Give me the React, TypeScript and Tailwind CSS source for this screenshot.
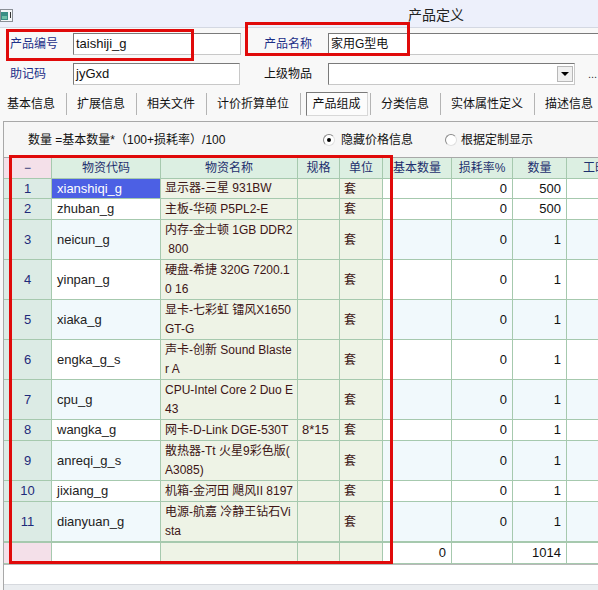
// 产品定义 — 产品组成 tab
const FONT = { fontFamily: '"Liberation Sans", "Noto Sans CJK SC", sans-serif' };

interface Part {
  n: number;
  code: string;
  name: string[];
  spec?: string;
  h: 'h-[20px]' | 'h-[21px]' | 'h-[40px]';
  qty: string;
}

const parts: Part[] = [
  { n: 1, code: 'xianshiqi_g', name: ['显示器-三星 931BW'], h: 'h-[20px]', qty: '500' },
  { n: 2, code: 'zhuban_g', name: ['主板-华硕 P5PL2-E'], h: 'h-[21px]', qty: '500' },
  { n: 3, code: 'neicun_g', name: ['内存-金士顿 1GB DDR2', '\u00a0800'], h: 'h-[40px]', qty: '1' },
  { n: 4, code: 'yinpan_g', name: ['硬盘-希捷 320G 7200.1', '0 16'], h: 'h-[40px]', qty: '1' },
  { n: 5, code: 'xiaka_g', name: ['显卡-七彩虹 镭风X1650', 'GT-G'], h: 'h-[40px]', qty: '1' },
  { n: 6, code: 'engka_g_s', name: ['声卡-创新 Sound Blaste', 'r A'], h: 'h-[40px]', qty: '1' },
  { n: 7, code: 'cpu_g', name: ['CPU-Intel Core 2 Duo E', '43'], h: 'h-[40px]', qty: '1' },
  { n: 8, code: 'wangka_g', name: ['网卡-D-Link DGE-530T'], spec: '8*15', h: 'h-[21px]', qty: '1' },
  { n: 9, code: 'anreqi_g_s', name: ['散热器-Tt 火星9彩色版(', 'A3085)'], h: 'h-[40px]', qty: '1' },
  { n: 10, code: 'jixiang_g', name: ['机箱-金河田 飓风II 8197'], h: 'h-[21px]', qty: '1' },
  { n: 11, code: 'dianyuan_g', name: ['电源-航嘉 冷静王钻石Vi', 'sta'], h: 'h-[40px]', qty: '1' },
];

const cell = 'shrink-0 flex items-center overflow-hidden whitespace-nowrap border-r border-b border-[#a6c9ae]';
const tabs = ['基本信息', '扩展信息', '相关文件', '计价折算单位', '产品组成', '分类信息', '实体属性定义', '描述信息'];

function AppIcon() {
  return (
    <svg width="13" height="13" viewBox="0 0 13 13">
      <rect x="0.5" y="0.5" width="12" height="12" fill="#f4f6f8" stroke="#8a8f96" />
      <rect x="1" y="3" width="7" height="8" fill="#3a8f86" />
      <rect x="2" y="7" width="5" height="3" fill="#6fc0a8" />
      <rect x="10" y="3" width="1" height="6" fill="#333" />
    </svg>
  );
}

function Radio({ on }: { on: boolean }) {
  return (
    <span className="w-[12px] h-[12px] rounded-full border border-t-[#8a8a8a] border-l-[#8a8a8a] border-r-[#e0e0e0] border-b-[#e0e0e0] bg-white flex items-center justify-center">
      {on && <span className="w-[4px] h-[4px] rounded-full bg-black" />}
    </span>
  );
}

function PartRow({ p }: { p: Part }) {
  const tint = p.n !== 1 && p.n % 2 === 1 ? 'bg-[#f1f9fc]' : 'bg-white';
  return (
    <div className={`flex ${p.h}`}>
      <div className={`${cell} w-[48px] justify-center bg-[#dcebe5] text-[#1e2a7a] text-[13px]`}>{p.n}</div>
      <div
        className={`${cell} w-[109px] pl-[5px] text-[13px] ${
          p.n === 1 ? 'bg-[#4c60e4] text-white' : `${tint} text-[#222]`
        }`}
      >
        {p.code}
      </div>
      <div className={`${cell} w-[137px] pl-[4px] bg-[#eef3e6] text-[#3d1515] text-[12px] leading-[19px]`}>
        <div>
          {p.name.map((l) => (
            <div key={l}>{l}</div>
          ))}
        </div>
      </div>
      <div className={`${cell} w-[42px] pl-[4px] bg-[#eef3e6] text-[#3d1515] text-[13px]`}>{p.spec}</div>
      <div className={`${cell} w-[43px] pl-[4px] bg-[#eef3e6] text-[#3d1515] text-[12px]`}>套</div>
      <div className={`${cell} w-[69px] ${tint}`} />
      <div className={`${cell} w-[61px] justify-end pr-[5px] ${tint} text-[13px] text-[#111]`}>0</div>
      <div className={`${cell} w-[54px] justify-end pr-[5px] ${tint} text-[13px] text-[#111]`}>{p.qty}</div>
      <div className={`${cell} w-[60px] ${tint}`} />
    </div>
  );
}

export default function App() {
  return (
    <div className="relative w-[598px] h-[590px] overflow-hidden bg-[#f8f8f8] text-[12px] text-[#111]" style={FONT}>
      {/* title bar */}
      <div className="h-[28px] flex items-center bg-[#edf0fb] border-b border-[#d4d8e2] pt-[3px]">
        <AppIcon />
        <span className="ml-[395px] text-[14px] text-[#222]">产品定义</span>
      </div>

      {/* form rows */}
      <div className="mt-[5px] h-[22px] flex items-center">
        <span className="pl-[10px] w-[73px] text-[#1c2f88]">产品编号</span>
        <div className="w-[168px] h-[22px] bg-white border border-t-[#7a7a7a] border-l-[#7a7a7a] border-r-[#c8c8c8] border-b-[#c8c8c8] pl-[2px] flex items-center text-[13px]">
          taishiji_g
        </div>
        <span className="ml-[23px] w-[64px] text-[#1c2f88]">产品名称</span>
        <div className="flex-1 h-[22px] bg-white border border-t-[#7a7a7a] border-l-[#7a7a7a] border-r-0 border-b-[#c8c8c8] pl-[2px] flex items-center">
          家用G型电
        </div>
      </div>
      <div className="mt-[8px] h-[22px] flex items-center">
        <span className="pl-[10px] w-[73px] text-[#1c2f88]">助记码</span>
        <div className="w-[167px] h-[22px] bg-white border border-t-[#7a7a7a] border-l-[#7a7a7a] border-r-[#c8c8c8] border-b-[#c8c8c8] pl-[2px] flex items-center text-[13px]">
          jyGxd
        </div>
        <span className="ml-[24px] w-[64px]">上级物品</span>
        <div className="w-[247px] h-[22px] bg-white border border-t-[#7a7a7a] border-l-[#7a7a7a] border-r-[#c8c8c8] border-b-[#c8c8c8] flex items-center justify-end pr-[1px]">
          <div className="w-[16px] h-[16px] bg-[#f0f0f0] border border-[#b8b8b8] flex items-center justify-center">
            <span className="w-0 h-0 border-l-[4px] border-r-[4px] border-t-[4px] border-l-transparent border-r-transparent border-t-black" />
          </div>
        </div>
        <span className="ml-[13px] text-[11px] text-[#333]">...</span>
      </div>

      {/* tabs */}
      <div className="mt-[6px] h-[26px] flex items-center whitespace-nowrap">
        {tabs.map((t, i) => (
          <div key={t} className="flex items-center h-full shrink-0">
            {i > 0 && <span className="w-px h-[22px] bg-[#b4b4b4]" />}
            {t === '产品组成' ? (
              <span className="h-[24px] ml-[5px] mr-[2px] px-[6px] flex items-center bg-[#fcfcfc] border border-t-[#7a7a7a] border-l-[#7a7a7a] border-r-[#d8d8d8] border-b-[#d8d8d8]">
                {t}
              </span>
            ) : (
              <span className={`h-[24px] flex items-center ${i === 0 ? 'pl-[7px] pr-[10.5px]' : 'px-[10.5px]'}`}>{t}</span>
            )}
          </div>
        ))}
      </div>

      {/* panel */}
      <div className="mt-[4px] ml-[3px] bg-white border-t border-l border-[#a8a8a8]">
        <div className="h-[36px] flex items-center bg-[#f6f6f6] border-b border-[#a8a8a8]">
          <span className="pl-[24px] w-[319px]">数量 =基本数量*（100+损耗率）/100</span>
          <Radio on />
          <span className="ml-[6px] w-[104px]">隐藏价格信息</span>
          <Radio on={false} />
          <span className="ml-[4px]">根据定制显示</span>
        </div>

        <div className="overflow-hidden">
          {/* header */}
          <div className="flex h-[21px] bg-[#dcefe2] text-[#1e2f6e]">
            <div className={`${cell} w-[48px] justify-center bg-[#f4e0e9]`}>−</div>
            <div className={`${cell} w-[109px] justify-center`}>物资代码</div>
            <div className={`${cell} w-[137px] justify-center`}>物资名称</div>
            <div className={`${cell} w-[42px] justify-center`}>规格</div>
            <div className={`${cell} w-[43px] justify-center`}>单位</div>
            <div className={`${cell} w-[69px] justify-center`}>基本数量</div>
            <div className={`${cell} w-[61px] justify-center`}>损耗率%</div>
            <div className={`${cell} w-[54px] justify-center`}>数量</div>
            <div className={`${cell} w-[60px] pl-[16px]`}>工时</div>
          </div>

          {parts.map((p) => (
            <PartRow key={p.n} p={p} />
          ))}

          {/* totals */}
          <div className="flex h-[22px] border-t border-[#a6c9ae] text-[13px]">
            <div className={`${cell} w-[48px] bg-[#f4e0e9]`} />
            <div className={`${cell} w-[109px] bg-white`} />
            <div className={`${cell} w-[137px] bg-[#eef3e6]`} />
            <div className={`${cell} w-[42px] bg-[#eef3e6]`} />
            <div className={`${cell} w-[43px] bg-[#eef3e6]`} />
            <div className={`${cell} w-[69px] justify-end pr-[5px] bg-white`}>0</div>
            <div className={`${cell} w-[61px] bg-white`} />
            <div className={`${cell} w-[54px] justify-end pr-[5px] bg-white`}>1014</div>
            <div className={`${cell} w-[60px] bg-white`} />
          </div>
          <div className="h-px bg-[#b8b8b8]" />
          <div className="h-[19px] bg-white" />
          <div className="h-[10px] bg-[#eaedf0] border-t border-[#d6d9de]" />
        </div>
      </div>

      {/* red annotation boxes */}
      <div className="absolute left-[6px] top-[29px] w-[188px] h-[32px] border-[3px] border-[#e00a0a]" />
      <div className="absolute left-[245px] top-[22px] w-[165px] h-[34px] border-[3px] border-[#e00a0a]" />
      <div className="absolute left-[9px] top-[155px] w-[384px] h-[409px] border-[3px] border-[#e00a0a]" />
    </div>
  );
}
